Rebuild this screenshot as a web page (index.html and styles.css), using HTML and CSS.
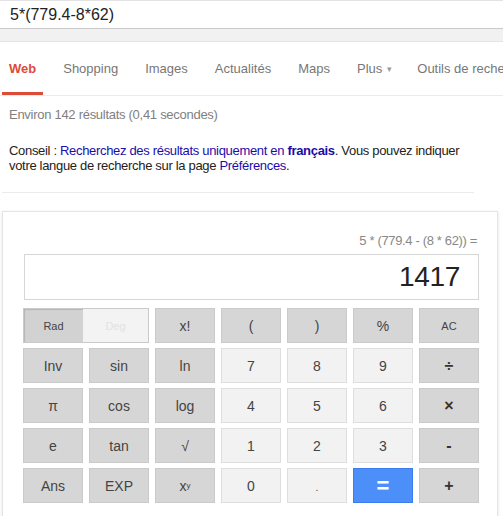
FILE: index.html
```html
<!DOCTYPE html>
<html lang="fr">
<head>
<meta charset="utf-8">
<link rel="stylesheet" href="styles.css">
</head>
<body>
<div class="search">5*(779.4-8*62)</div>
<div class="strip"></div>
<nav class="tabs">
  <span class="tab active">Web</span>
  <span class="tab">Shopping</span>
  <span class="tab">Images</span>
  <span class="tab">Actualités</span>
  <span class="tab">Maps</span>
  <span class="tab">Plus <span class="caret">▾</span></span>
  <span class="tab">Outils de recherche</span>
</nav>
<div class="results">
  <div class="stats">Environ 142 résultats (0,41 secondes)</div>
  <div class="tip">Conseil : <a class="lnk">Recherchez des résultats uniquement en <b>français</b></a>. Vous pouvez indiquer votre langue de recherche sur la page <a class="lnk">Préférences</a>.</div>
</div>
<div class="sep"></div>
<div class="card">
  <div class="expr">5 * (779.4 - (8 * 62)) =</div>
  <div class="display">1417</div>
  <div class="keys">
    <div class="mode"><span class="rad">Rad</span><span class="deg">Deg</span></div>
    <div class="k d">x!</div>
    <div class="k d">(</div>
    <div class="k d">)</div>
    <div class="k d">%</div>
    <div class="k d sm">AC</div>

    <div class="k d">Inv</div>
    <div class="k d">sin</div>
    <div class="k d">ln</div>
    <div class="k l">7</div>
    <div class="k l">8</div>
    <div class="k l">9</div>
    <div class="k d op">÷</div>

    <div class="k d">π</div>
    <div class="k d">cos</div>
    <div class="k d">log</div>
    <div class="k l">4</div>
    <div class="k l">5</div>
    <div class="k l">6</div>
    <div class="k d op">×</div>

    <div class="k d">e</div>
    <div class="k d">tan</div>
    <div class="k d">√</div>
    <div class="k l">1</div>
    <div class="k l">2</div>
    <div class="k l">3</div>
    <div class="k d op">-</div>

    <div class="k d">Ans</div>
    <div class="k d">EXP</div>
    <div class="k d">x<sup class="sup">y</sup></div>
    <div class="k l">0</div>
    <div class="k l dot">.</div>
    <div class="k eq">=</div>
    <div class="k d op">+</div>
  </div>
</div>
</body>
</html>
```
FILE: styles.css
```css
html, body {
  margin: 0;
  padding: 0;
  background: #fff;
  font-family: "Liberation Sans", Arial, sans-serif;
  overflow: hidden;
}
.search {
  height: 27px;
  border-top: 1px solid #e3e3e3;
  border-bottom: 1px solid #c9c9c9;
  font-size: 16px;
  line-height: 27px;
  color: #222;
  padding-left: 10px;
  white-space: nowrap;
}
.strip {
  height: 12px;
  background: #f1f1f1;
  border-bottom: 1px solid #e5e5e5;
}
.tabs {
  display: flex;
  gap: 13px;
  height: 53px;
  padding-left: 2px;
  border-bottom: 1px solid #ebebeb;
  white-space: nowrap;
  overflow: hidden;
}
.tab {
  display: flex;
  align-items: center;
  padding: 0 7px;
  font-size: 13px;
  color: #777;
  border-bottom: 3px solid transparent;
  box-sizing: border-box;
  height: 53px;
  padding-top: 3px;
}
.tab:last-child {
  margin-left: -2px;
}
.tab.active {
  color: #dd4b39;
  font-weight: bold;
  border-bottom-color: #dd4b39;
}
.caret {
  font-size: 9px;
  color: #999;
  margin-left: 5px;
}
.results {
  padding: 11px 9px 0 9px;
  font-size: 13px;
}
.stats {
  color: #808080;
  line-height: 16px;
  letter-spacing: -0.28px;
}
.tip {
  margin-top: 20px;
  color: #222;
  line-height: 15px;
  width: 470px;
  letter-spacing: -0.32px;
}
.lnk {
  color: #1a0dab;
  text-decoration: none;
}
.sep {
  margin: 19px 29px 0 2px;
  height: 1px;
  background: #ebebeb;
}
.card {
  margin: 18px 5px 0 2px;
  border: 1px solid #e5e5e5;
  box-shadow: 0 1px 3px rgba(0,0,0,0.12);
  padding: 21px 18px 20px 20px;
}
.expr {
  text-align: right;
  font-size: 13px;
  color: #888;
  line-height: 16px;
  padding-right: 2px;
  letter-spacing: -0.35px;
}
.display {
  margin: 5px 0 0 1px;
  height: 44px;
  border: 1px solid #d6d6d6;
  text-align: right;
  font-size: 28px;
  line-height: 44px;
  color: #222;
  padding-right: 18px;
  letter-spacing: -0.3px;
}
.keys {
  margin-top: 8px;
  display: grid;
  grid-template-columns: repeat(7, 60px);
  grid-auto-rows: 35px;
  column-gap: 6px;
  row-gap: 5px;
}
.k {
  box-sizing: border-box;
  display: flex;
  align-items: center;
  justify-content: center;
  font-size: 14px;
  color: #444;
}
.k.d {
  background: #d6d6d6;
  border: 1px solid #cacaca;
}
.k.l {
  background: #f2f2f2;
  border: 1px solid #dedede;
}
.k.sm {
  font-size: 11px;
}
.k.op {
  font-size: 16px;
  font-weight: bold;
  color: #333;
}
.k.dot {
  font-size: 10px;
  padding-top: 4px;
}
.k.eq {
  background: #4d8ff8;
  border: 1px solid #3b7cef;
  color: #fff;
  font-size: 22px;
  font-weight: bold;
}
.sup {
  font-size: 8px;
  vertical-align: 4px;
}
.mode {
  grid-column: span 2;
  display: flex;
  box-sizing: border-box;
  border: 1px solid #cacaca;
}
.rad {
  width: 59px;
  box-sizing: border-box;
  background: #d2d2d2;
  box-shadow: inset 1px 1px 1px #b5b5b5;
  display: flex;
  align-items: center;
  justify-content: center;
  font-size: 11px;
  color: #444;
}
.deg {
  flex: 1;
  background: #f3f3f3;
  display: flex;
  align-items: center;
  justify-content: center;
  font-size: 11px;
  color: #e2e2e2;
}
```
